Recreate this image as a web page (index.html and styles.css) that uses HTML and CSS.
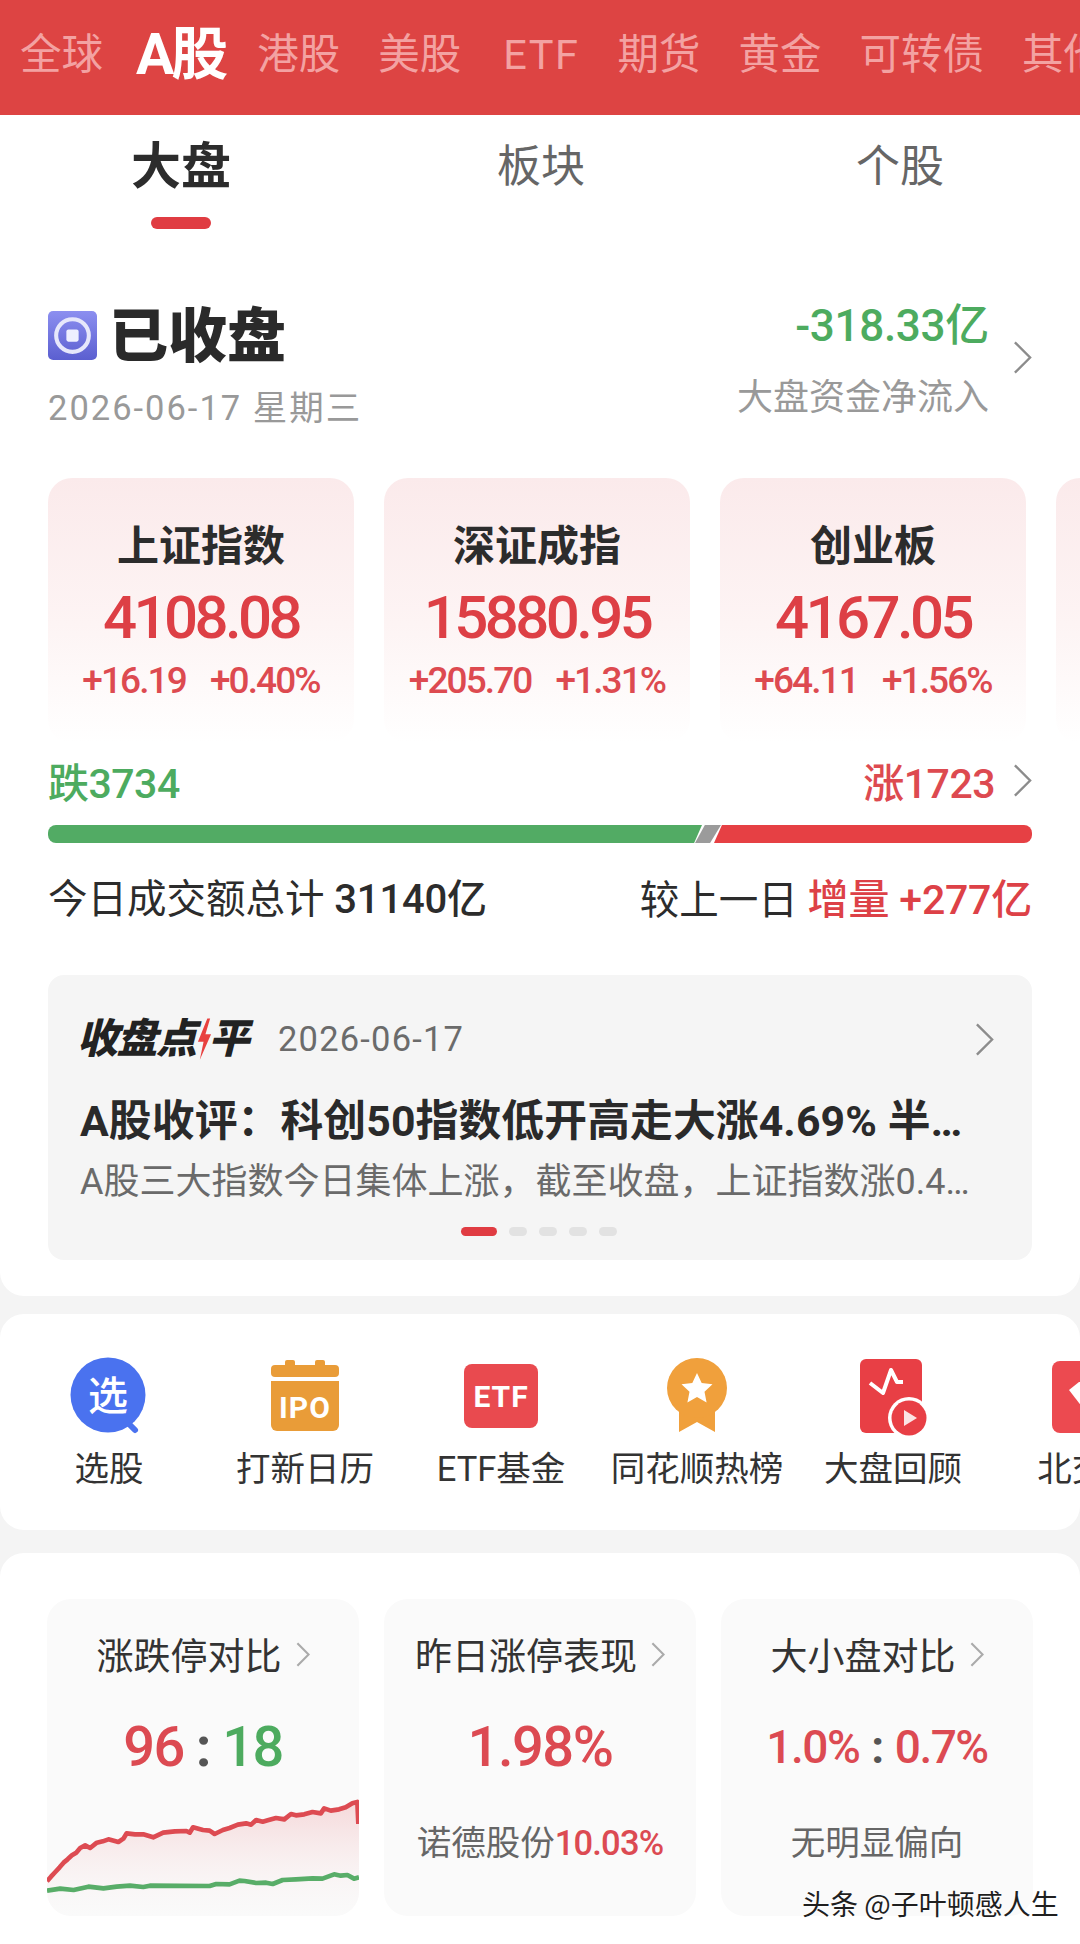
FILE: index.html
```html
<!DOCTYPE html>
<html lang="zh-CN">
<head>
<meta charset="utf-8">
<title>A股大盘</title>
<link rel="stylesheet" href="styles.css">
</head>
<body>
<div class="page">
  <nav class="market-tabs">
    <span>全球</span><span class="active">A股</span><span>港股</span><span>美股</span><span class="latin">ETF</span><span>期货</span><span>黄金</span><span>可转债</span><span>其他</span>
  </nav>

  <section class="panel main-panel">
    <div class="sub-tabs">
      <div class="sub-tab active"><span>大盘</span><i></i></div>
      <div class="sub-tab"><span>板块</span></div>
      <div class="sub-tab"><span>个股</span></div>
    </div>

    <div class="status">
      <div class="status-left">
        <div class="status-head">
          <svg class="status-icon" viewBox="0 0 48 48">
            <defs><linearGradient id="sg" x1="0" y1="0" x2="0" y2="1"><stop offset="0" stop-color="#8c8ff0"/><stop offset="1" stop-color="#5b5fd0"/></linearGradient></defs>
            <rect width="48" height="48" rx="5" fill="url(#sg)"/>
            <circle cx="24" cy="24" r="16" fill="none" stroke="#e6e7fb" stroke-width="4"/>
            <rect x="18" y="18" width="12" height="12" rx="2" fill="#eef0ff"/>
          </svg>
          <h1>已收盘</h1>
        </div>
        <div class="status-date">2026-06-17 星期三</div>
      </div>
      <div class="status-right">
        <div class="flow-text">
          <div class="flow-num">-318.33亿</div>
          <div class="flow-label">大盘资金净流入</div>
        </div>
        <svg class="chev chev-lg status-chev" viewBox="0 0 20 34"><path d="M2 1l16 16L2 33"/></svg>
      </div>
    </div>

    <div class="index-row">
      <article class="index-card"><h2>上证指数</h2><div class="index-val">4108.08</div><div class="index-chg"><span>+16.19</span><span>+0.40%</span></div></article>
      <article class="index-card"><h2>深证成指</h2><div class="index-val">15880.95</div><div class="index-chg"><span>+205.70</span><span>+1.31%</span></div></article>
      <article class="index-card"><h2>创业板</h2><div class="index-val">4167.05</div><div class="index-chg"><span>+64.11</span><span>+1.56%</span></div></article>
      <article class="index-card"></article>
    </div>

    <div class="breadth">
      <span class="down-count">跌3734</span>
      <span class="up-wrap"><span class="up-count">涨1723</span><svg class="chev chev-lg" viewBox="0 0 20 34"><path d="M2 1l16 16L2 33"/></svg></span>
    </div>
    <div class="breadth-bar"><i class="bar-green"></i><i class="bar-grey"></i><i class="bar-red"></i></div>

    <div class="turnover">
      <div>今日成交额总计 <span class="num">31140亿</span></div>
      <div>较上一日 <b>增量</b> <b class="num">+277亿</b></div>
    </div>

    <div class="review">
      <div class="review-head">
        <div class="review-logo"><span>收盘点</span><svg class="bolt" viewBox="0 0 16 44"><path d="M11 0L1 25h6L3 44l12-27H9l5-17z"/></svg><span>平</span></div>
        <span class="review-date">2026-06-17</span>
        <svg class="chev chev-lg review-chev" viewBox="0 0 20 34"><path d="M2 1l16 16L2 33"/></svg>
      </div>
      <div class="review-title">A股收评：科创50指数低开高走大涨4.69% 半…</div>
      <div class="review-desc">A股三大指数今日集体上涨，截至收盘，上证指数涨0.4…</div>
      <div class="dots"><i class="on"></i><i></i><i></i><i></i><i></i></div>
    </div>
  </section>

  <section class="panel tools">
    <div class="tool">
      <svg class="tool-icon" viewBox="0 0 80 80">
        <path d="M57 65l9 9" stroke="#4a72ef" stroke-width="6" stroke-linecap="round"/>
        <circle cx="39" cy="39" r="37.500" fill="#4a72ef"/>
        <text x="39" y="54" text-anchor="middle" class="ico-zh">选</text>
      </svg>
      <span>选股</span>
    </div>
    <div class="tool">
      <svg class="tool-icon" viewBox="0 0 80 80">
        <rect x="20" y="4" width="10" height="10" rx="2" fill="#e99c38"/>
        <rect x="50" y="4" width="10" height="10" rx="2" fill="#e99c38"/>
        <rect x="6" y="9" width="68" height="12" rx="4" fill="#e99c38"/>
        <path d="M6 25h68v44a6 6 0 0 1-6 6H12a6 6 0 0 1-6-6z" fill="#e99c38"/>
        <text x="40" y="62" text-anchor="middle" class="ico-en ipo">IPO</text>
      </svg>
      <span>打新日历</span>
    </div>
    <div class="tool">
      <svg class="tool-icon" viewBox="0 0 80 80">
        <rect x="3" y="8" width="74" height="64" rx="8" fill="#e94a4f"/>
        <text x="40" y="51" text-anchor="middle" class="ico-en etf">ETF</text>
      </svg>
      <span>ETF基金</span>
    </div>
    <div class="tool">
      <svg class="tool-icon" viewBox="0 0 80 80">
        <path d="M22 50v26l18-10 18 10V50z" fill="#f0a03c"/>
        <circle cx="40" cy="32" r="30" fill="#f0a03c"/>
        <path d="M40 17l4.700 10 10.800 1.300-8 7.400 2.100 10.800L40 41l-9.600 5.500 2.100-10.800-8-7.400 10.800-1.300z" fill="#fff"/>
      </svg>
      <span>同花顺热榜</span>
    </div>
    <div class="tool">
      <svg class="tool-icon" viewBox="0 0 80 80">
        <rect x="7" y="3" width="62" height="74" rx="6" fill="#e83f45"/>
        <path d="M17 27l13 10 8-23 6 12h6" fill="none" stroke="#fff" stroke-width="4" stroke-linejoin="round"/>
        <circle cx="56" cy="62" r="21" fill="#fff"/>
        <circle cx="56" cy="62" r="17.500" fill="#e83f45"/>
        <path d="M51 54l13 8-13 8z" fill="#fbe4e4"/>
      </svg>
      <span>大盘回顾</span>
    </div>
    <div class="tool">
      <svg class="tool-icon" viewBox="0 0 80 80">
        <rect x="3" y="5" width="74" height="72" rx="8" fill="#ec4a50"/>
        <path d="M20 34l10-8h20l10 8-20 26z" fill="#fff"/>
      </svg>
      <span>北交所</span>
    </div>
  </section>

  <section class="panel stats">
    <article class="stat">
      <h3>涨跌停对比<svg class="chev chev-sm" viewBox="0 0 20 34"><path d="M2 1l16 16L2 33"/></svg></h3>
      <div class="stat-val big"><span class="red">96</span><span class="colon">:</span><span class="green">18</span></div>
      <svg class="stat-chart" viewBox="50 0 940 408" preserveAspectRatio="none">
        <defs><linearGradient id="cg" x1="0" y1="0" x2="0" y2="1"><stop offset="0" stop-color="#f3c9cb" stop-opacity=".7"/><stop offset="1" stop-color="#fafafa" stop-opacity=".2"/></linearGradient></defs>
        <path d="M50 298L75 276 100 248 125 226 150 204 165 196 180 204 200 188 235 178 265 186 290 160 340 163 370 172 400 158 470 153 490 142 520 150 555 162 600 144 650 130 680 120 710 125 740 114 785 102 800 106 850 96 880 96 885 85 930 88 985 62 990 130V408H50Z" fill="url(#cg)"/>
        <path d="M50 304L62 290 75 276 88 262 100 248 112 238 125 226 138 218 150 204 165 196 180 204 200 188 218 184 235 178 265 186 280 176 290 160 315 163 340 163 370 172 400 158 435 154 470 153 480 158 490 142 520 150 540 152 555 162 580 150 600 144 625 134 650 130 665 134 680 120 700 125 715 121 740 114 765 118 785 102 800 106 825 103 850 96 875 100 885 85 905 92 930 88 950 82 970 70 985 66 988 132" fill="none" stroke="#dd4b52" stroke-width="14" stroke-linejoin="round"/>
        <path d="M50 332L90 326 130 330 175 320 220 325 260 320 300 317 340 321 360 317 540 318 560 312 600 313 630 302 645 303 680 309 710 308 730 312 760 300 800 298 850 295 880 296 915 283 935 287 955 285 975 296 990 292" fill="none" stroke="#58ad68" stroke-width="14" stroke-linejoin="round"/>
      </svg>
    </article>
    <article class="stat">
      <h3>昨日涨停表现<svg class="chev chev-sm" viewBox="0 0 20 34"><path d="M2 1l16 16L2 33"/></svg></h3>
      <div class="stat-val big red">1.98%</div>
      <div class="stat-sub">诺德股份<span class="red">10.03%</span></div>
    </article>
    <article class="stat">
      <h3>大小盘对比<svg class="chev chev-sm" viewBox="0 0 20 34"><path d="M2 1l16 16L2 33"/></svg></h3>
      <div class="stat-val mid"><span class="red">1.0%</span><span class="colon">:</span><span class="red">0.7%</span></div>
      <div class="stat-sub">无明显偏向</div>
    </article>
  </section>

  <div class="watermark">头条 @子叶顿感人生</div>
</div>
</body>
</html>
```

FILE: styles.css
```css
* { box-sizing: border-box; }
html, body { margin: 0; padding: 0; }
body {
  width: 1080px;
  height: 1944px;
  overflow: hidden;
  background: #f4f4f4;
  font-family: Roboto, "Noto Sans CJK SC", sans-serif;
  color: #2c2c2c;
}
h1, h2, h3 { margin: 0; }
.page { position: relative; width: 1080px; height: 1944px; overflow: hidden; }

/* market tabs */
.market-tabs {
  height: 115px;
  background: #dd4443;
  display: flex;
  align-items: center;
  gap: 38px;
  padding: 0 0 6px 20px;
  overflow: hidden;
  white-space: nowrap;
  font-size: 41.500px;
  line-height: 50px;
  color: #f3a2a2;
}
.market-tabs span { flex: none; }
.market-tabs .active { color: #fff; font-size: 57px; font-weight: 700; margin: 0 -6px 0 -5px; letter-spacing: -3px; }
.market-tabs .latin { margin-left: 4px; letter-spacing: 1.500px; }

.panel { background: #fff; border-radius: 24px; }
.main-panel { height: 1181px; border-radius: 0 0 24px 24px; }

/* sub tabs */
.sub-tabs { display: grid; grid-template-columns: 362px 358px 360px; height: 190px; padding-top: 27px; }
.sub-tab { display: flex; flex-direction: column; align-items: center; }
.sub-tab span { font-size: 44px; line-height: 50px; color: #666; }
.sub-tab.active span { font-size: 50px; font-weight: 700; color: #2c2c2c; }
.sub-tab i { width: 60px; height: 12px; margin-top: 25px; border-radius: 6px; background: #e03c42; }

/* status */
.status { display: flex; justify-content: space-between; padding: 0 48px; height: 173px; }
.status-head { display: flex; align-items: center; gap: 12px; height: 60px; margin-top: 2px; }
.status-icon { width: 49px; height: 49px; margin-top: -4px; }
.status-head h1 { font-size: 59px; line-height: 60px; font-weight: 900; color: #2a2a2a; }
.status-date { margin-top: 22px; font-size: 34.500px; line-height: 38px; color: #999; letter-spacing: 2px; white-space: nowrap; }
.status-right { display: flex; align-items: center; gap: 24px; height: 120px; }
.flow-text { text-align: right; margin-top: -8px; }
.flow-num { font-size: 44px; line-height: 46px; font-weight: 500; color: #4dab5f; letter-spacing: -.3px; }
.flow-label { margin-top: 27px; font-size: 36px; line-height: 44px; color: #999; }
.chev { fill: none; stroke: #8c8c8c; stroke-width: 2.500; flex: none; }
.chev-lg { width: 19px; height: 33px; }
.status-chev { margin-top: -16px; }
.chev-sm { width: 14px; height: 27px; margin-left: 14px; stroke: #aaa; stroke-width: 3; }

/* index cards */
.index-row { display: flex; gap: 30px; padding-left: 48px; overflow: hidden; }
.index-card {
  flex: none;
  width: 306px;
  height: 265px;
  border-radius: 24px;
  background: linear-gradient(180deg, #fbeaeb 0%, #fdf4f4 55%, #fff 100%);
  padding-top: 44px;
  text-align: center;
}
.index-card h2 { font-size: 42px; line-height: 50px; font-weight: 700; color: #2c2c2c; }
.index-val { margin-top: 11px; font-size: 60px; line-height: 70px; font-weight: 500; color: #dd3f45; letter-spacing: -3.600px; }
.index-chg { display: flex; justify-content: center; gap: 24px; margin-top: 8px; font-size: 37px; line-height: 40px; font-weight: 500; color: #dd4a50; letter-spacing: -1.900px; }

/* breadth */
.breadth { display: flex; justify-content: space-between; align-items: center; padding: 0 48px; margin-top: 13px; height: 48px; font-size: 41px; font-weight: 500; }
.down-count { color: #4dab5f; letter-spacing: -.5px; }
.up-count { color: #dd4a50; letter-spacing: -.5px; }
.up-wrap { display: flex; align-items: center; gap: 18px; }
.breadth-bar { display: flex; height: 18px; margin: 21px 48px 0; }
.breadth-bar i { display: block; }
.bar-green { flex: 0 0 654px; background: #52ab64; border-radius: 8px 0 0 8px; clip-path: polygon(0 0, 100% 0, 98.800% 100%, 0 100%); }
.bar-grey { flex: 0 0 26px; margin-left: -7px; background: #9b9b9b; clip-path: polygon(38% 0, 100% 0, 58% 100%, 0 100%); }
.bar-red { flex: 1; margin-left: -7px; background: #e64044; border-radius: 0 8px 8px 0; clip-path: polygon(2.500% 0, 100% 0, 100% 100%, 0 100%); }

.turnover { display: flex; justify-content: space-between; align-items: center; padding: 0 48px; margin-top: 30px; height: 46px; font-size: 39.500px; color: #2c2c2c; white-space: nowrap; }
.turnover .num { font-size: 40px; font-weight: 500; letter-spacing: -.2px; }
.turnover b { color: #dd4147; font-weight: 500; font-size: 41px; }
.turnover b.num { font-weight: 500; font-size: 41px; }

/* review card */
.review { margin: 56px 48px 0; height: 285px; border-radius: 16px; background: #f5f5f5; padding: 42px 32px 0; position: relative; }
.review-head { display: flex; align-items: center; height: 44px; }
.review-logo { display: flex; align-items: center; margin-left: -3px; font-size: 41px; line-height: 44px; font-weight: 900; font-style: italic; color: #222; letter-spacing: -1.500px; }
.bolt { width: 15px; height: 44px; fill: #e8403f; margin: 0 -3px 0 1px; }
.review-date { margin-left: 30px; font-size: 34.500px; color: #6b6b6b; letter-spacing: 1.200px; }
.review-chev { margin-left: auto; margin-right: 6px; }
.review-title { margin-top: 35px; font-size: 42.800px; line-height: 50px; font-weight: 700; color: #2a2a2a; white-space: nowrap; letter-spacing: .1px; }
.review-desc { margin-top: 13px; font-size: 36px; line-height: 46px; color: #6a6a6a; white-space: nowrap; }
.dots { display: flex; justify-content: center; gap: 12px; margin-top: 22px; padding-right: 3px; }
.dots i { width: 18px; height: 9px; border-radius: 5px; background: #e2e2e2; }
.dots i.on { width: 36px; background: #e03c42; }

/* tools */
.tools { display: flex; height: 216px; margin-top: 18px; padding: 42px 0 0 11px; overflow: hidden; }
.tool { flex: 0 0 196px; display: flex; flex-direction: column; align-items: center; font-size: 34.500px; line-height: 44px; color: #333; white-space: nowrap; }
.tool-icon { width: 80px; height: 80px; }
.tool span { margin-top: 11px; }
.ico-zh { font-size: 40px; font-weight: 500; fill: #fff; font-family: "Noto Sans CJK SC", sans-serif; }
.ico-en { font-weight: 700; fill: #fff; font-family: Roboto, sans-serif; }
.ipo { font-size: 30px; letter-spacing: 1px; }
.etf { font-size: 30px; letter-spacing: 1px; }

/* stats */
.stats { display: flex; gap: 25px; height: 420px; margin-top: 23px; padding: 46px 48px 0 47px; border-radius: 24px 24px 0 0; }
.stat { flex: 0 0 312px; height: 317px; border-radius: 24px; background: #fafafa; padding-top: 31px; position: relative; overflow: hidden; text-align: center; }
.stat h3 { display: flex; align-items: center; justify-content: center; height: 48px; font-size: 37px; font-weight: 400; color: #333; }
.stat-val { display: flex; align-items: center; justify-content: center; gap: 12px; height: 60px; margin-top: 39px; font-weight: 500; }
.big { font-size: 56px; letter-spacing: -1.500px; }
.mid { font-size: 46px; letter-spacing: -1.500px; }
.red { color: #dc4a52; }
.green { color: #4dab5f; }
.colon { color: #555; font-weight: 700; }
.stat-sub { margin-top: 44px; font-size: 34.500px; line-height: 44px; color: #666; white-space: nowrap; }
.stat-sub .red { font-weight: 500; letter-spacing: -.8px; }
.stat-chart { position: absolute; left: 0; bottom: 0; width: 312px; height: 136px; }

.watermark {
  position: absolute;
  left: 802px;
  top: 1886px;
  font-size: 28px;
  line-height: 34px;
  color: #1f1f1f;
  font-family: "Noto Sans CJK SC", sans-serif;
  white-space: nowrap;
  text-shadow: 0 0 2px #fff, 0 0 2px #fff, 0 0 3px #fff;
}
```
